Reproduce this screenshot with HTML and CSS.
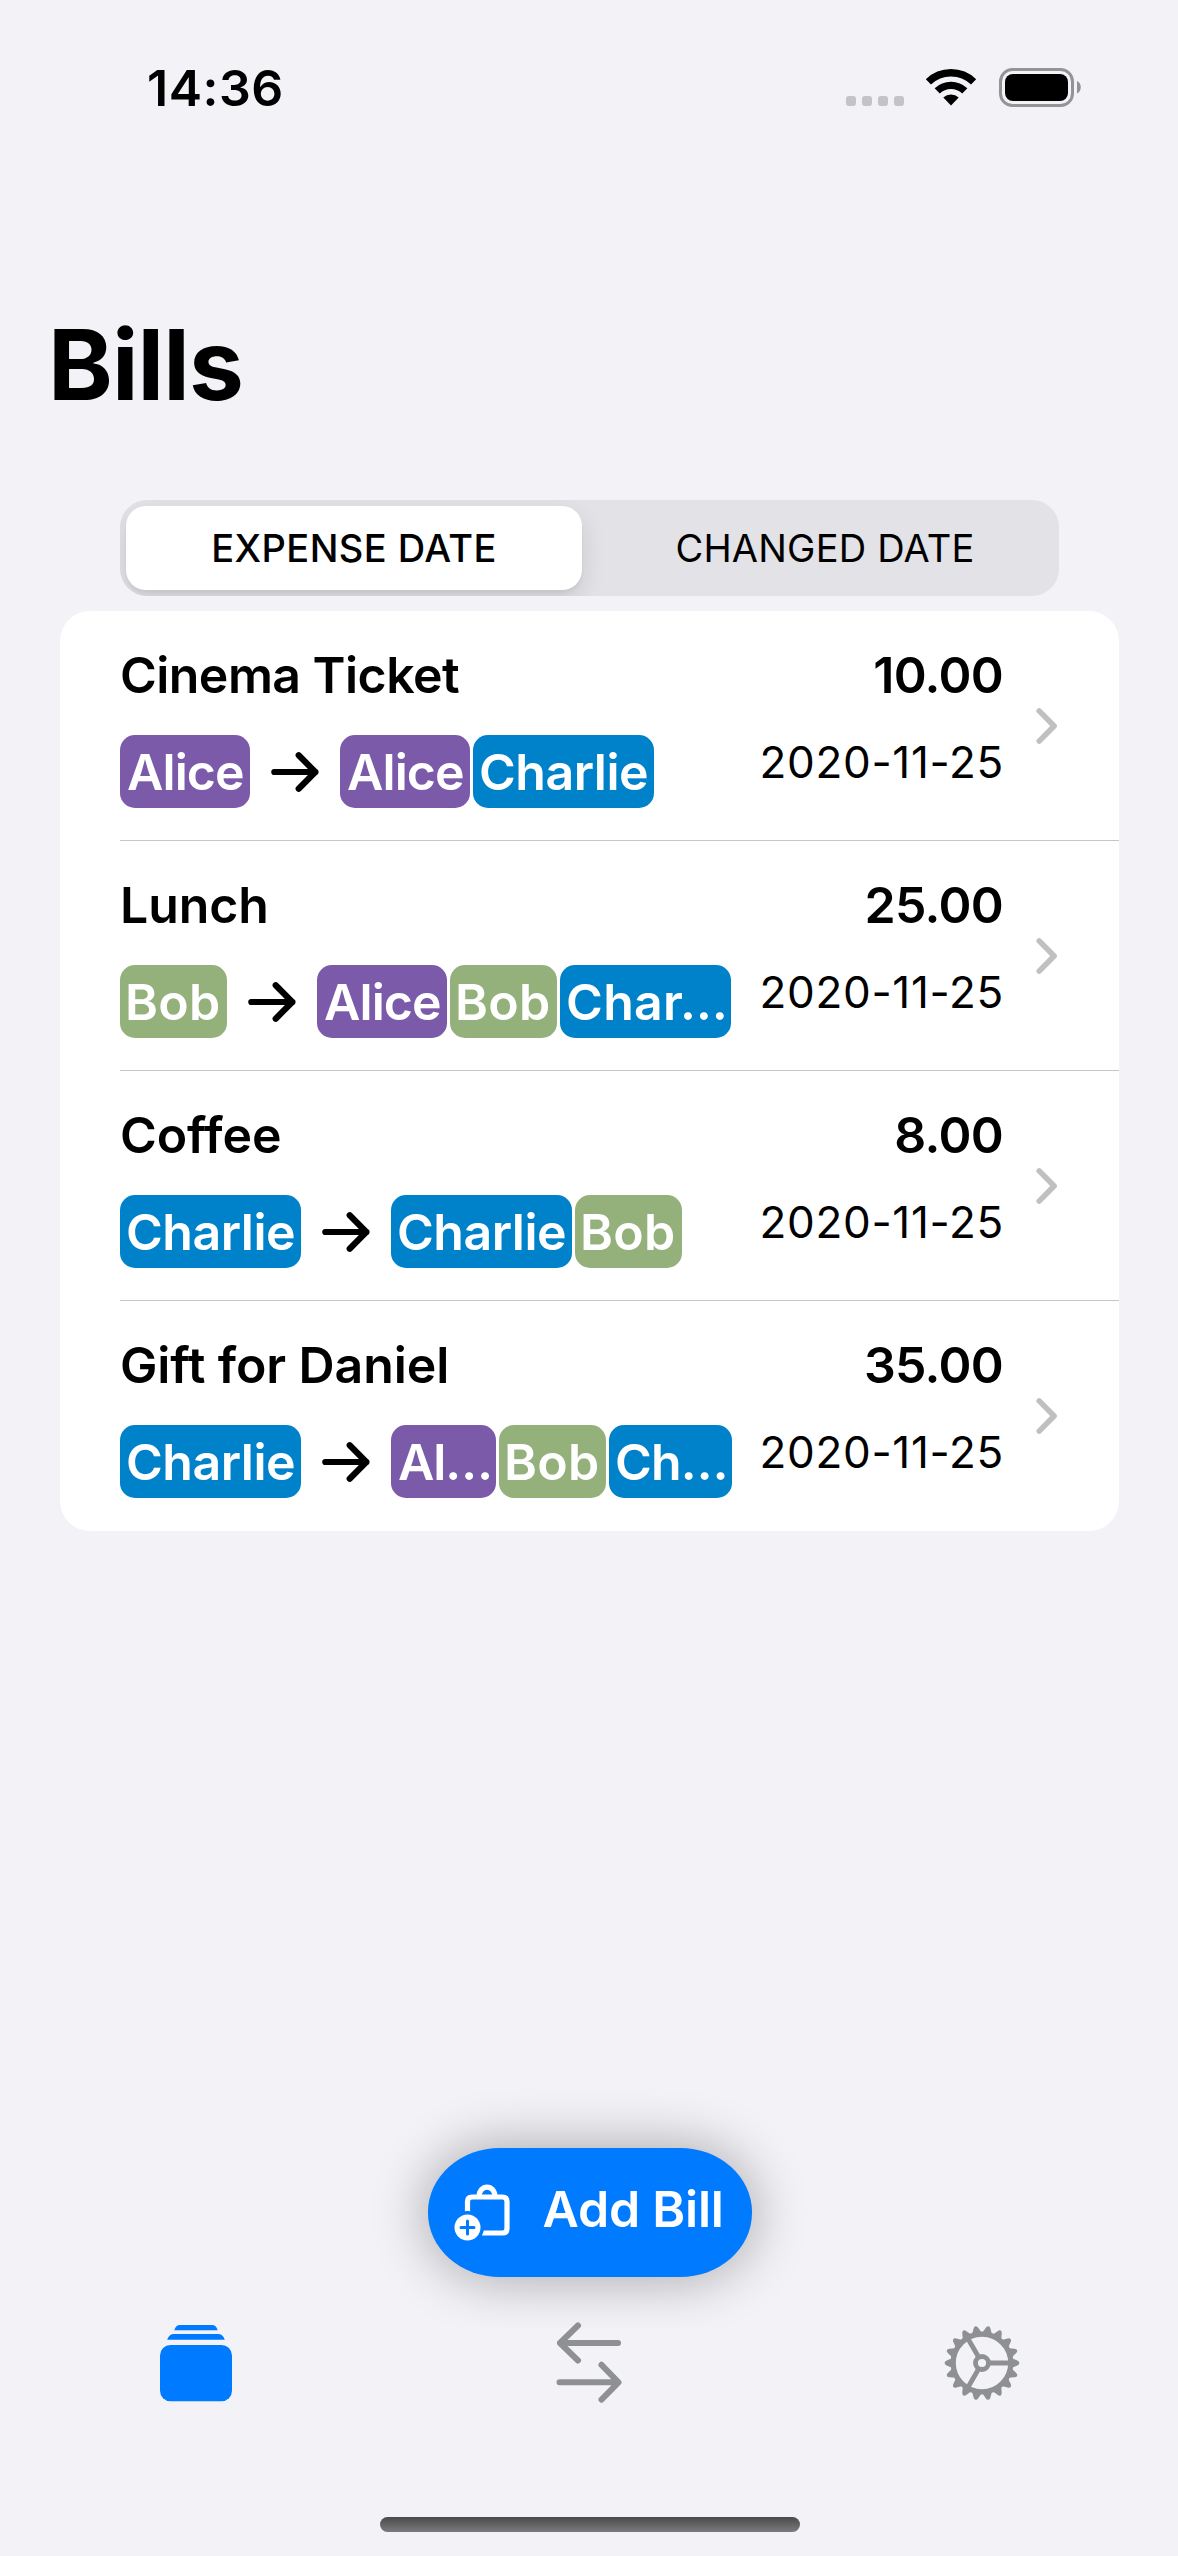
FILE: index.html
```
<!DOCTYPE html>
<html lang="en">
<head>
<meta charset="utf-8">
<title>Bills</title>
<link rel="stylesheet" href="styles.css">
</head>
<body>
<svg width="0" height="0" class="defs" aria-hidden="true">
  <symbol id="arrow" viewBox="0 0 48 42"><path d="M3.3 21H44.5M27.7 4.3 44.3 21 27.7 37.7" fill="none" stroke="#000" stroke-width="6.2" stroke-linecap="round" stroke-linejoin="round"/></symbol>
  <symbol id="chevron" viewBox="0 0 22 38"><path d="M3.2 3.9 18.1 19 3.2 34.1" fill="none" stroke="#c0c0c1" stroke-width="5.6" stroke-linecap="round" stroke-linejoin="round"/></symbol>
</svg>
<div class="screen">
  <header class="status">
    <time class="clock">14:36</time>
    <div class="indicators">
      <div class="signal"><i></i><i></i><i></i><i></i></div>
      <svg class="wifi" width="52" height="38" viewBox="0 0 52 38" fill="none" stroke="#000">
        <path d="M3.4 13.900a32.600 32.600 0 0 1 45.200 0" stroke-width="7.4"/>
        <path d="M12.200 22.900a20 20 0 0 1 27.600 0" stroke-width="7.4"/>
        <path d="M18.300 29.500a11.600 11.600 0 0 1 15.400 0L26 37.600Z" fill="#000" stroke="none"/>
      </svg>
      <svg class="battery" width="83" height="39" viewBox="0 0 83 39">
        <rect x="1.5" y="1.5" width="72" height="36" rx="12" fill="none" stroke="#949497" stroke-width="3"/>
        <rect x="6" y="6" width="63" height="27" rx="8" fill="#000"/>
        <path d="M78 13c5 2.2 5 10.3 0 12.5Z" fill="#949497"/>
      </svg>
    </div>
  </header>

  <h1 class="heading">Bills</h1>

  <div class="segments">
    <div class="segment segment--on">EXPENSE DATE</div>
    <div class="segment segment--off">CHANGED DATE</div>
  </div>

  <main class="card">
    <article class="bill">
      <div class="info">
        <div class="title title--tight">Cinema Ticket</div>
        <div class="people"><span class="tag alice">Alice</span><svg class="arrow"><use href="#arrow"/></svg><span class="tag alice">Alice</span><span class="tag charlie">Charlie</span></div>
      </div>
      <div class="figures"><div class="amount">10.00</div><div class="date">2020-11-25</div></div>
      <svg class="chevron"><use href="#chevron"/></svg>
    </article>
    <article class="bill">
      <div class="info">
        <div class="title">Lunch</div>
        <div class="people"><span class="tag bob">Bob</span><svg class="arrow"><use href="#arrow"/></svg><span class="tag alice">Alice</span><span class="tag bob">Bob</span><span class="tag charlie charlie--cut">Char…</span></div>
      </div>
      <div class="figures"><div class="amount">25.00</div><div class="date">2020-11-25</div></div>
      <svg class="chevron"><use href="#chevron"/></svg>
    </article>
    <article class="bill">
      <div class="info">
        <div class="title">Coffee</div>
        <div class="people"><span class="tag charlie">Charlie</span><svg class="arrow"><use href="#arrow"/></svg><span class="tag charlie">Charlie</span><span class="tag bob">Bob</span></div>
      </div>
      <div class="figures"><div class="amount">8.00</div><div class="date">2020-11-25</div></div>
      <svg class="chevron"><use href="#chevron"/></svg>
    </article>
    <article class="bill">
      <div class="info">
        <div class="title">Gift for Daniel</div>
        <div class="people"><span class="tag charlie">Charlie</span><svg class="arrow"><use href="#arrow"/></svg><span class="tag alice alice--short">Al…</span><span class="tag bob">Bob</span><span class="tag charlie charlie--short">Ch…</span></div>
      </div>
      <div class="figures"><div class="amount">35.00</div><div class="date">2020-11-25</div></div>
      <svg class="chevron"><use href="#chevron"/></svg>
    </article>
  </main>

  <div class="action">
    <button class="add">
      <svg width="57" height="58" viewBox="0 0 57 58">
        <path d="M13.5 28V17.500q0-4.500 4.500-4.500H48.500q4.500 0 4.500 4.500V44.500q0 4.500-4.500 4.500H28" fill="none" stroke="#fff" stroke-width="5.200"/>
        <path d="M25 13C25 -.3 41 -.3 41 13" fill="none" stroke="#fff" stroke-width="5.200"/>
        <circle cx="13.500" cy="43.500" r="16.500" fill="#007aff"/>
        <circle cx="13.500" cy="43.500" r="13" fill="#fff"/>
        <path d="M13.500 37v13M7 43.500h13" stroke="#007aff" stroke-width="3" stroke-linecap="round"/>
      </svg>
      <span>Add Bill</span>
    </button>
  </div>

  <nav class="tabs">
    <svg width="72" height="77" viewBox="0 0 72 77" fill="#007aff">
      <path d="M14.300 5.200Q15.800 0 20 0H52Q56.200 0 57.700 5.200Z"/>
      <path d="M7.200 14.800Q9 9 14 9H58Q63 9 64.800 14.800Z"/>
      <rect y="20" width="72" height="56.300" rx="10.500"/>
    </svg>
    <svg width="68" height="82" viewBox="0 0 68 82" fill="none" stroke="#8f9094" stroke-width="6" stroke-linecap="round" stroke-linejoin="round">
      <path d="M63 21H5M23 3.500 5 21 23 38.500"/>
      <path d="M4.500 60.300H63M46.500 42.800 63.500 60.300 46.500 77.700"/>
    </svg>
    <svg width="76" height="76" viewBox="-38 -38 76 76" fill="none" stroke="#8f9094">
      <circle r="28.800" stroke-width="5.200"/>
      <circle r="6.500" stroke-width="4.800"/>
      <g fill="#8f9094" stroke="none">
        <g id="six">
          <path id="tooth" d="M30-4.800 35.300-2.400Q37.400-1.600 37.400 0T35.300 2.400L30 4.800Z"/>
          <use href="#tooth" transform="rotate(20)"/>
          <use href="#tooth" transform="rotate(40)"/>
          <use href="#tooth" transform="rotate(60)"/>
          <use href="#tooth" transform="rotate(80)"/>
          <use href="#tooth" transform="rotate(100)"/>
        </g>
        <use href="#six" transform="rotate(120)"/>
        <use href="#six" transform="rotate(240)"/>
      </g>
      <path d="M8 0H28M-4-6.930-14-24.250M-4 6.930-14 24.250" stroke-width="4.800"/>
    </svg>
  </nav>
  <div class="home"></div>
</div>
</body>
</html>
```
FILE: styles.css
```
* { box-sizing: border-box; }
body {
  margin: 0;
  background: #f2f2f7;
  color: #000;
  font-family: Inter, "Liberation Sans", sans-serif;
}
.defs { position: absolute; }
.screen {
  width: 1178px;
  height: 2556px;
  display: flex;
  flex-direction: column;
}
.status {
  display: flex;
  justify-content: space-between;
  padding: 58px 96px 0 147px;
  height: 295px;
}
.clock {
  font-size: 50px;
  font-weight: 600;
  line-height: 60px;
  letter-spacing: .5px;
}
.indicators { display: flex; padding-top: 10px; }
.signal { display: flex; gap: 6px; padding-top: 28px; margin-right: 21.300px; }
.signal i { width: 10px; height: 10px; border-radius: 3px; background: #c4c3c8; }
.wifi { margin-right: 21.700px; }
.heading {
  margin: 0 0 65px 48px;
  font-size: 98px;
  font-weight: 700;
  line-height: 140px;
  letter-spacing: -.9px;
}
.segments {
  display: flex;
  width: 939px;
  height: 96px;
  margin: 0 0 15px 120px;
  padding: 6px;
  border-radius: 27px;
  background: #e3e2e7;
  overflow: hidden;
}
.segment {
  flex: 1;
  display: flex;
  align-items: center;
  justify-content: center;
  font-size: 38px;
  letter-spacing: .43px;
  font-weight: 500;
  border-radius: 20px;
}
.segment--on {
  flex: 0 0 456px;
  background: #fff;
  box-shadow: 0 9px 24px rgba(0,0,0,.12), 0 3px 3px rgba(0,0,0,.04);
}
.segment--off { font-weight: 400; letter-spacing: .2px; padding-left: 15px; }
.card {
  width: 1059px;
  margin-left: 60px;
  padding-left: 60px;
  border-radius: 30px;
  background: #fff;
}
.bill {
  display: flex;
  height: 230px;
  padding-top: 34px;
  border-bottom: 1px solid #c6c6c8;
}
.bill:last-child { border-bottom: 0; }
.info { width: 612px; }
.title {
  font-size: 50px;
  font-weight: 580;
  line-height: 60px;
  letter-spacing: -.1px;
  margin-bottom: 30px;
}
.title--tight { letter-spacing: -.55px; }
.people { display: flex; align-items: center; gap: 3px; }
.tag {
  height: 73px;
  line-height: 74px;
  border-radius: 15px;
  color: #fff;
  font-size: 50px;
  font-weight: 580;
  letter-spacing: -.5px;
  padding-left: 6px;
  white-space: nowrap;
}
.alice { width: 130px; background: #7b5aaa; letter-spacing: -.9px; padding-left: 7px; }
.bob { width: 107px; background: #94b17c; letter-spacing: .3px; padding-left: 5px; }
.charlie { width: 181px; background: #0082ca; }
.alice--short { width: 105px; letter-spacing: -1.100px; }
.charlie--short { width: 123px; letter-spacing: -.9px; }
.charlie--cut { width: 171px; letter-spacing: .3px; }
.arrow { width: 48px; height: 42px; margin: 0 18px; }
.figures { width: 272px; text-align: right; }
.amount {
  font-size: 50px;
  font-weight: 620;
  line-height: 60px;
  letter-spacing: -.7px;
  margin: 0 1px 27px 0;
}
.date { font-size: 44px; line-height: 60px; letter-spacing: .7px; }
.chevron { width: 22px; height: 38px; margin: 62px 0 0 31.500px; }
.action {
  margin-top: auto;
  height: 180px;
  padding-left: 428px;
}
.add {
  display: flex;
  align-items: center;
  width: 324px;
  height: 129px;
  padding: 0 0 0 26px;
  border: 0;
  border-radius: 72px / 64px;
  background: #007aff;
  box-shadow: 0 0 56px rgba(0,0,0,.33);
  color: #fff;
  font: 580 50px/60px Inter, "Liberation Sans", sans-serif;
  letter-spacing: -.2px;
}
.add svg { margin-top: 1px; }
.add span { margin: 0 0 7px 31.500px; white-space: nowrap; }
.tabs {
  display: grid;
  grid-template: 70px / repeat(3, 1fr);
  justify-items: center;
  align-items: center;
  height: 70px;
  margin-bottom: 119px;
  background: #f2f2f7;
}
.home {
  width: 420px;
  height: 15px;
  margin: 0 0 24px 380px;
  border-radius: 8px;
  background: linear-gradient(#4a4a4b, #7b7b7d);
}
```
